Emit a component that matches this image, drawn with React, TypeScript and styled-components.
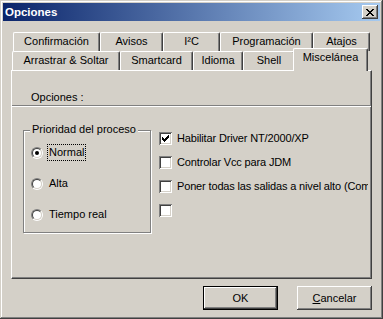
import React from 'react';
import styled, { createGlobalStyle, css } from 'styled-components';

const FACE = '#d4d0c8';

const GlobalStyle = createGlobalStyle`
  html, body { margin: 0; padding: 0; background: ${FACE}; }
  body { font-family: "Liberation Sans", Arial, sans-serif; font-size: 11px; color: #000; }
  * { box-sizing: border-box; }
`;

const raised = css`
  box-shadow: inset -1px -1px #404040, inset 1px 1px #fff, inset -2px -2px #808080, inset 2px 2px ${FACE};
`;

const Window = styled.div`
  width: 383px;
  height: 319px;
  padding: 3px;
  background: ${FACE};
  box-shadow: inset -1px -1px #404040, inset 1px 1px ${FACE}, inset -2px -2px #808080, inset 2px 2px #fff;
  display: flex;
  flex-direction: column;
`;

const TitleBar = styled.div`
  height: 18px;
  flex: none;
  display: flex;
  align-items: center;
  justify-content: space-between;
  padding: 0 2px;
  background: linear-gradient(to right, #0a246a, #a6caf0);
`;

const TitleText = styled.span`
  color: #fff;
  font-weight: bold;
  font-size: 11.5px;
  line-height: 13px;
`;

const CloseButton = styled.button`
  width: 16px;
  height: 14px;
  padding: 0;
  border: 0;
  background: ${FACE};
  ${raised};
  display: flex;
  align-items: center;
  justify-content: center;
`;

const Body = styled.div`
  flex: 1;
  display: flex;
  flex-direction: column;
  padding: 11px 8px 0 8px;
`;

const TabStrip = styled.div`
  display: flex;
  flex-direction: column;
`;

const TabRow = styled.div<{ $indent: number }>`
  display: flex;
  height: 19px;
  padding-left: ${p => p.$indent}px;
`;

const Tab = styled.div<{ $w: number; $selected?: boolean }>`
  flex: none;
  width: ${p => p.$w}px;
  height: 19px;
  background: ${FACE};
  border-left: 1px solid #fff;
  border-top: 1px solid #fff;
  border-right: 1px solid #404040;
  border-radius: 2px 2px 0 0;
  box-shadow: inset -1px 0 #808080;
  padding-top: 2px;
  line-height: 13px;
  text-align: center;
  white-space: nowrap;
  ${p =>
    p.$selected &&
    css`
      position: relative;
      z-index: 1;
      height: 23px;
      margin: -3px -2px 0 -2px;
    `}
`;

const Panel = styled.div`
  height: 209px;
  display: flex;
  flex-direction: column;
  border-left: 1px solid #fff;
  border-top: 1px solid #fff;
  border-right: 1px solid #404040;
  border-bottom: 1px solid #404040;
  box-shadow: inset -1px -1px #808080;
`;

const PanelHeader = styled.div`
  padding: 20px 0 1px 19px;
  line-height: 13px;
`;

const Separator = styled.div`
  height: 2px;
  border-top: 1px solid #808080;
  border-bottom: 1px solid #fff;
`;

const Content = styled.div`
  display: flex;
  align-items: flex-start;
  gap: 8px;
  padding: 23px 3px 0 11px;
`;

const GroupBox = styled.div`
  flex: none;
  width: 128px;
  height: 103px;
  border: 1px solid #808080;
  box-shadow: inset 1px 1px #fff, 1px 1px #fff;
  display: flex;
  flex-direction: column;
  align-items: flex-start;
`;

const GroupLegend = styled.span`
  margin: -8px 0 0 6px;
  padding: 0 2px;
  line-height: 13px;
  background: ${FACE};
`;

const RadioList = styled.div`
  display: flex;
  flex-direction: column;
  gap: 14px;
  margin-top: 8px;
  padding-left: 7px;
`;

const RadioRow = styled.div`
  display: flex;
  align-items: center;
  height: 17px;
`;

const RadioCircle = styled.span<{ $checked?: boolean }>`
  position: relative;
  flex: none;
  width: 12px;
  height: 12px;
  border-radius: 50%;
  border: 1px solid;
  border-color: #808080 #fff #fff #808080;
  &::before {
    content: '';
    position: absolute;
    inset: 0;
    border-radius: 50%;
    border: 1px solid;
    border-color: #404040 ${FACE} ${FACE} #404040;
    background: #fff;
  }
  &::after {
    content: '';
    position: absolute;
    left: 3px;
    top: 3px;
    width: 4px;
    height: 4px;
    border-radius: 50%;
    background: ${p => (p.$checked ? '#000' : 'transparent')};
  }
`;

const RadioLabel = styled.span<{ $focused?: boolean }>`
  margin-left: 4px;
  padding: 0 1px;
  line-height: 15px;
  border: 1px dotted ${p => (p.$focused ? '#000' : 'transparent')};
  white-space: nowrap;
`;

const CheckList = styled.div`
  flex: 1;
  min-width: 0;
  overflow: hidden;
  display: flex;
  flex-direction: column;
  gap: 11px;
  margin-top: 2px;
`;

const CheckRow = styled.div`
  display: flex;
  align-items: center;
  height: 13px;
  white-space: nowrap;
`;

const CheckBox = styled.span`
  flex: none;
  width: 13px;
  height: 13px;
  background: #fff;
  box-shadow: inset 1px 1px #808080, inset -1px -1px #fff, inset 2px 2px #404040, inset -2px -2px ${FACE};
  display: flex;
`;

const CheckLabel = styled.span`
  margin-left: 5px;
  line-height: 13px;
  letter-spacing: -0.15px;
`;

const ButtonRow = styled.div`
  display: flex;
  justify-content: flex-end;
  gap: 19px;
  margin-top: 7px;
`;

const DialogButton = styled.button<{ $default?: boolean }>`
  width: 75px;
  height: 24px;
  padding: 0;
  font: inherit;
  color: #000;
  background: ${FACE};
  border: ${p => (p.$default ? '1px solid #000' : '0')};
  ${p =>
    p.$default
      ? css`box-shadow: inset -1px -1px #404040, inset 1px 1px #fff, inset -2px -2px #808080;`
      : raised};
  u { text-decoration: underline; }
`;

const CloseGlyph = () => (
  <svg width="8" height="7" viewBox="0 0 8 7" shapeRendering="crispEdges">
    {[
      [0, 0, 2], [6, 0, 2],
      [1, 1, 2], [5, 1, 2],
      [2, 2, 4],
      [3, 3, 2],
      [2, 4, 4],
      [1, 5, 2], [5, 5, 2],
      [0, 6, 2], [6, 6, 2],
    ].map(([x, y, w], i) => (
      <rect key={i} x={x} y={y} width={w} height={1} fill="#000" />
    ))}
  </svg>
);

const CheckGlyph = () => (
  <svg width="13" height="13" viewBox="0 0 13 13" shapeRendering="crispEdges">
    {[
      [3, 5], [4, 6], [5, 7], [6, 6], [7, 5], [8, 4], [9, 3],
    ].map(([x, y], i) => (
      <rect key={i} x={x} y={y} width={1} height={3} fill="#000" />
    ))}
  </svg>
);

const row1 = [
  { label: 'Confirmación', w: 87 },
  { label: 'Avisos', w: 63 },
  { label: 'I²C', w: 57 },
  { label: 'Programación', w: 93 },
  { label: 'Atajos', w: 57 },
];

const row2 = [
  { label: 'Arrastrar & Soltar', w: 108 },
  { label: 'Smartcard', w: 73 },
  { label: 'Idioma', w: 50 },
  { label: 'Shell', w: 52 },
  { label: 'Miscelánea', w: 75, selected: true },
];

const radios = [
  { label: 'Normal', checked: true },
  { label: 'Alta' },
  { label: 'Tiempo real' },
];

const checks = [
  { label: 'Habilitar Driver NT/2000/XP', checked: true },
  { label: 'Controlar Vcc para JDM' },
  { label: 'Poner todas las salidas a nivel alto (Como en JDM)' },
  { label: '' },
];

export default function App() {
  return (
    <>
      <GlobalStyle />
      <Window>
        <TitleBar>
          <TitleText>Opciones</TitleText>
          <CloseButton aria-label="Cerrar">
            <CloseGlyph />
          </CloseButton>
        </TitleBar>
        <Body>
          <TabStrip>
            <TabRow $indent={2}>
              {row1.map(t => (
                <Tab key={t.label} $w={t.w}>{t.label}</Tab>
              ))}
            </TabRow>
            <TabRow $indent={1}>
              {row2.map(t => (
                <Tab key={t.label} $w={t.w} $selected={t.selected}>{t.label}</Tab>
              ))}
            </TabRow>
          </TabStrip>
          <Panel>
            <PanelHeader>Opciones :</PanelHeader>
            <Separator />
            <Content>
              <GroupBox>
                <GroupLegend>Prioridad del proceso</GroupLegend>
                <RadioList>
                  {radios.map(r => (
                    <RadioRow key={r.label}>
                      <RadioCircle $checked={r.checked} />
                      <RadioLabel $focused={r.checked}>{r.label}</RadioLabel>
                    </RadioRow>
                  ))}
                </RadioList>
              </GroupBox>
              <CheckList>
                {checks.map((c, i) => (
                  <CheckRow key={i}>
                    <CheckBox>{c.checked && <CheckGlyph />}</CheckBox>
                    {c.label && <CheckLabel>{c.label}</CheckLabel>}
                  </CheckRow>
                ))}
              </CheckList>
            </Content>
          </Panel>
          <ButtonRow>
            <DialogButton $default>OK</DialogButton>
            <DialogButton>
              <u>C</u>ancelar
            </DialogButton>
          </ButtonRow>
        </Body>
      </Window>
    </>
  );
}
